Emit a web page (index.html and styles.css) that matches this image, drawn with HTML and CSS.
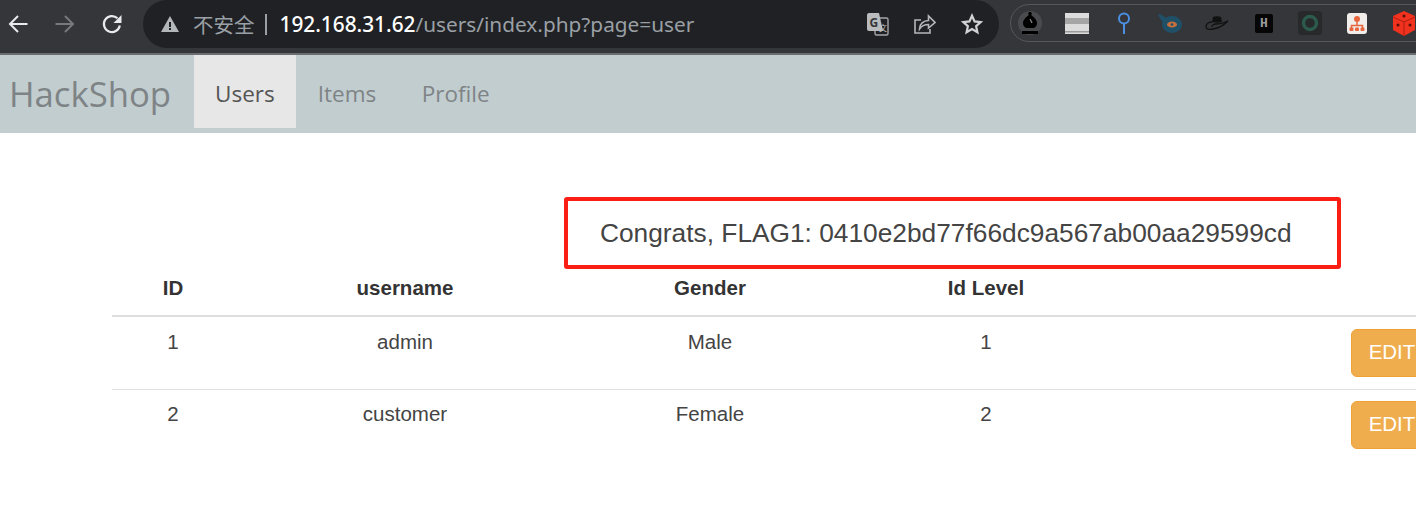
FILE: index.html
```html
<!DOCTYPE html>
<html lang="en">
<head>
  <meta charset="UTF-8">
  <title>HackShop - Users</title>
  <meta name="viewport" content="width=device-width, initial-scale=1">
  <link rel="stylesheet" href="styles.css">
</head>
<body>
  <div class="toolbar">
    <div class="nav-btns">
      <span class="nav-btn">
        <svg width="20" height="20" viewBox="0 0 20 20" fill="none" stroke="#e8eaed" stroke-width="2"><path d="M19.500 10H2M10 2l-8 8 8 8"/></svg>
      </span>
      <span class="nav-btn">
        <svg width="20" height="20" viewBox="0 0 20 20" fill="none" stroke="#77797c" stroke-width="2"><path d="M.5 10H18M10 2l8 8-8 8"/></svg>
      </span>
      <span class="nav-btn">
        <svg width="22" height="22" viewBox="0 0 22 22" fill="none" stroke="#e8eaed" stroke-width="2.200"><path d="M18.800 12.500a8 8 0 1 1-2.300-7.200"/><path d="M20.500 2v8h-8z" fill="#e8eaed" stroke="none"/></svg>
      </span>
    </div>
    <div class="omnibox">
      <svg class="warn" width="18" height="16" viewBox="0 0 18 16"><path d="M9 0l9 16H0z" fill="#b4b7b9"/><path d="M8 6h2v5H8zM8 12h2v2H8z" fill="#202124"/></svg>
      <span class="insecure">不安全</span>
      <span class="sep"></span>
      <span class="url"><b>192.168.31.62</b>/users/index.php?page=user</span>
      <span class="omni-icons">
        <svg width="22" height="23" viewBox="0 0 22 23"><rect x="8" y="5" width="13" height="17" rx="1.500" fill="#202124" stroke="#a3a5a8" stroke-width="1.400"/><path d="M2 0h10l4 18H2a2 2 0 0 1-2-2V2a2 2 0 0 1 2-2z" fill="#b9bbbd"/><text x="2.500" y="13.500" class="tr-g">G</text><text x="12" y="18" class="tr-a">文</text></svg>
        <svg width="22" height="20" viewBox="0 0 22 20" fill="none" stroke="#b4b7b9" stroke-width="1.600"><path d="M7 6H1v13h15v-4"/><path d="M5.500 15c0-5 4-8.500 9-8.500V2l6.500 6.500L14.500 14v-3.500c-4 0-7 1.500-9 4.500z"/></svg>
        <svg width="22" height="22" viewBox="0 0 24 24" fill="none" stroke="#d0d2d4" stroke-width="2.400"><path d="M12 3l2.800 6.200 6.700.7-5 4.500 1.400 6.600-5.900-3.400-5.900 3.400 1.400-6.600-5-4.500 6.700-.7z"/></svg>
      </span>
    </div>
    <div class="extensions">
      <span class="ext">
        <svg width="24" height="26" viewBox="0 0 24 26"><circle cx="12" cy="13" r="12" fill="#4a4b4e"/><path d="M11 2h2l1 2-1 1c3 2 6 5 6 8 0 2-1 4-3 5H8c-2-1-3-3-3-5 0-3 3-6 6-8l-1-1z" fill="#000"/><path d="M12 9l2 4" stroke="#8a8a8a" stroke-width="1.200"/><rect x="4" y="21" width="16" height="3" fill="#000"/></svg>
      </span>
      <span class="ext">
        <svg width="24" height="21" viewBox="0 0 24 21"><rect width="24" height="21" fill="#dcdcdc"/><rect y="5" width="24" height="6" fill="#a6a6a6"/><rect y="18" width="24" height="1.500" fill="#9a9a9a"/></svg>
      </span>
      <span class="ext">
        <svg width="14" height="22" viewBox="0 0 14 22" fill="none" stroke="#4a90e2" stroke-width="2"><circle cx="7" cy="6.500" r="5"/><path d="M7 11.500V22"/></svg>
      </span>
      <span class="ext">
        <svg width="24" height="19" viewBox="0 0 24 19"><path d="M0 1l2-1 8 5-5 4z" fill="#1f5068"/><ellipse cx="14" cy="10.500" rx="10" ry="8.500" fill="#1f5068"/><ellipse cx="14" cy="10.500" rx="5" ry="3" fill="#c8703c"/><circle cx="14" cy="10.500" r="1.300" fill="#1f5068"/></svg>
      </span>
      <span class="ext">
        <svg width="24" height="15" viewBox="0 0 24 15"><path d="M8 1c3-1.500 6-.5 8 0l1 5c-3 1-7 1-10 0z" fill="#111"/><path d="M7 6c-4 0-6 2-6 5 0 2 3 3 7 2 6-1 11-4 15-8-4 2-9 3-12 3-2 0-4 1-4 3" fill="none" stroke="#111" stroke-width="1.300"/></svg>
      </span>
      <span class="ext">
        <span class="ext-h">H</span>
      </span>
      <span class="ext">
        <svg width="24" height="24" viewBox="0 0 24 24"><rect width="24" height="24" rx="3" fill="#28292b"/><circle cx="12" cy="12" r="6.500" fill="none" stroke="#2c5a4c" stroke-width="3.400"/></svg>
      </span>
      <span class="ext">
        <svg width="20" height="21" viewBox="0 0 20 21"><rect width="20" height="21" rx="3" fill="#f0edea"/><circle cx="10" cy="6" r="3" fill="#e8663f"/><path d="M10 8v5M4.500 15v-2.500h11V15" fill="none" stroke="#e8663f" stroke-width="1.500"/><rect x="2.500" y="14.500" width="4" height="3.500" rx="1" fill="#e8663f"/><rect x="8" y="14.500" width="4" height="3.500" rx="1" fill="#e8663f"/><rect x="13.500" y="14.500" width="4" height="3.500" rx="1" fill="#e8663f"/></svg>
      </span>
      <span class="ext">
        <svg width="24" height="25" viewBox="0 0 24 25"><path d="M12 0l11 5v14l-11 6-11-6V5z" fill="#f0321e"/><path d="M1 6l11 5 11-5M12 11v14" fill="none" stroke="#b01f10" stroke-width="1"/><circle cx="12" cy="5" r="1.500" fill="#5a1008"/><circle cx="6" cy="14" r="1.500" fill="#5a1008"/><circle cx="18" cy="14" r="1.500" fill="#5a1008"/></svg>
      </span>
    </div>
  </div>

  <nav class="navbar">
    <a class="brand" href="#">HackShop</a>
    <a class="nav-link active" href="#">Users</a>
    <a class="nav-link" href="#">Items</a>
    <a class="nav-link" href="#">Profile</a>
  </nav>

  <div class="content">
    <div class="flag-box">Congrats, FLAG1: 0410e2bd77f66dc9a567ab00aa29599cd</div>

    <table class="users">
      <thead>
        <tr>
          <th class="col-id">ID</th>
          <th class="col-name">username</th>
          <th class="col-gender">Gender</th>
          <th class="col-level">Id Level</th>
          <th class="col-action"></th>
        </tr>
      </thead>
      <tbody>
        <tr>
          <td>1</td>
          <td>admin</td>
          <td>Male</td>
          <td>1</td>
          <td><button class="btn-edit">EDIT</button></td>
        </tr>
        <tr>
          <td>2</td>
          <td>customer</td>
          <td>Female</td>
          <td>2</td>
          <td><button class="btn-edit">EDIT</button></td>
        </tr>
      </tbody>
    </table>
  </div>
</body>
</html>
```

FILE: styles.css
```css
html, body {
  margin: 0;
  padding: 0;
  height: 519px;
  overflow: hidden;
  background: #fff;
}
body {
  width: 1416px;
  font-family: "Liberation Sans", Arial, sans-serif;
  color: #444;
}

/* browser chrome */
.toolbar {
  display: flex;
  height: 53px;
  background: #35363a;
  border-bottom: 2px solid #6b6d70;
  overflow: hidden;
}
.nav-btns {
  display: flex;
  width: 143px;
  padding-bottom: 5px;
  box-sizing: border-box;
  align-items: center;
  flex-shrink: 0;
}
.nav-btn {
  display: flex;
  justify-content: center;
  width: 47px;
}
.nav-btn:first-child {
  margin-left: -6px;
}
.omnibox {
  display: flex;
  align-items: center;
  width: 856px;
  height: 48px;
  flex-shrink: 0;
  padding: 0 16px 0 18px;
  box-sizing: border-box;
  background: #202124;
  border-radius: 24px;
  font-family: "Noto Sans", "Noto Sans CJK SC", sans-serif;
  font-size: 20.8px;
  color: #9aa0a6;
}
.insecure {
  margin-left: 14px;
  font-family: "Noto Sans CJK SC", sans-serif;
  font-size: 20.5px;
}
.sep {
  width: 2px;
  height: 21px;
  margin: 0 13px 0 10px;
  background: #9aa0a6;
}
.url b {
  font-weight: 500;
  color: #fff;
}
.omni-icons {
  display: flex;
  align-items: center;
  gap: 25px;
  margin-left: auto;
}
.tr-g {
  font-size: 12px;
  font-weight: 700;
  fill: #35363a;
}
.tr-a {
  font-size: 8px;
  fill: #c4c7c9;
}
.extensions {
  display: flex;
  align-items: center;
  flex-shrink: 0;
  width: 460px;
  height: 38px;
  margin: 4px 0 0 11px;
  box-sizing: border-box;
  border: 1px solid #55575a;
  border-radius: 19px;
}
.ext {
  display: flex;
  justify-content: center;
  align-items: center;
  width: 46.7px;
  flex-shrink: 0;
}
.ext:first-child {
  margin-left: -4px;
}
.ext-h {
  width: 18px;
  height: 19px;
  border-radius: 2px;
  background: #060606;
  color: #9c9c9c;
  font-family: "Liberation Mono", monospace;
  font-size: 13px;
  font-weight: 700;
  line-height: 19px;
  text-align: center;
}

/* site navbar */
.navbar {
  display: flex;
  height: 73px;
  padding-bottom: 5px;
  background: #c2cdd0;
  font-family: "Open Sans", sans-serif;
}
.navbar a {
  display: flex;
  align-items: center;
  padding-top: 3px;
  box-sizing: border-box;
  text-decoration: none;
  color: #7e8486;
}
.navbar .brand {
  width: 193.5px;
  padding-top: 3px;
  padding-left: 9px;
  font-size: 34.7px;
}
.nav-link {
  padding: 0 21.5px;
  font-size: 22.5px;
}
.nav-link:last-child {
  margin-left: 2.5px;
}
.navbar .nav-link.active {
  background: #e7e7e7;
  color: #555;
}

/* page content */
.content {
  padding-top: 64px;
}
.flag-box {
  width: 777px;
  height: 72px;
  margin-left: 564px;
  box-sizing: border-box;
  padding-left: 32px;
  border: 4px solid #fa1e14;
  border-radius: 3px;
  font-size: 26.3px;
  line-height: 64px;
}
.users {
  width: 1321px;
  margin-left: 112px;
  table-layout: fixed;
  border-collapse: separate;
  border-spacing: 0;
  font-size: 20.5px;
  text-align: center;
}
.col-id { width: 122px; }
.col-name { width: 342px; }
.col-gender { width: 268px; }
.col-level { width: 284px; }
.users th {
  height: 48px;
  padding: 0 0 8px;
  box-sizing: border-box;
  border-bottom: 2px solid #ddd;
  font-weight: 700;
  color: #333;
}
.users td {
  height: 72px;
  padding: 12px 0 0;
  box-sizing: border-box;
  border-top: 1px solid #e2e2e2;
  vertical-align: top;
}
.users tbody tr:first-child td {
  border-top-color: transparent;
}
.users td:last-child {
  padding-top: 11px;
  text-align: right;
}
.btn-edit {
  width: 82px;
  height: 48px;
  padding: 0 0 2px;
  border: 1px solid #eea236;
  border-radius: 6px;
  background: #f0ad4e;
  color: #fff;
  font-family: inherit;
  font-size: 20.5px;
}
```
